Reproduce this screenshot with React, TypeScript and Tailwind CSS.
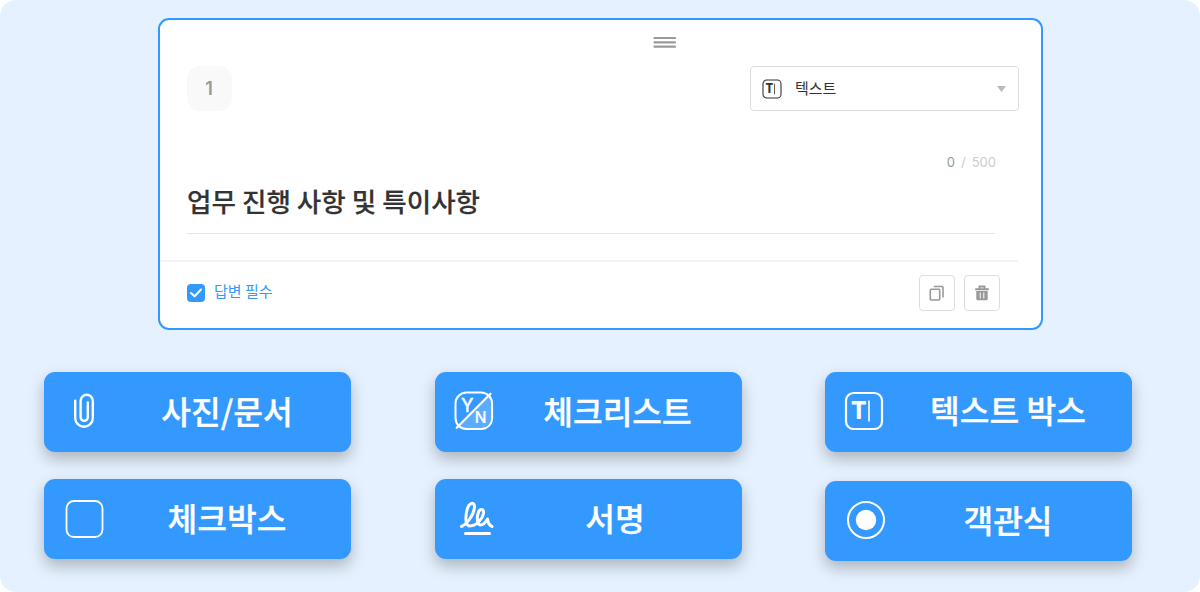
import type { ReactNode } from 'react'

function TextIcon({ className }: { className?: string }) {
  return (
    <svg viewBox="0 0 40 40" className={className} fill="none">
      <rect x="2" y="2" width="36" height="36" rx="7.5" stroke="currentColor" strokeWidth="2.2" />
      <text x="7" y="28" fontSize="25" fontWeight="800" fill="currentColor" textLength="15.5" lengthAdjust="spacingAndGlyphs" className="font-['Inter',sans-serif]">
        T
      </text>
      <path d="M25 9.5v21" stroke="currentColor" strokeWidth="1.6" />
    </svg>
  )
}

function ClipIcon() {
  return (
    <svg viewBox="0 0 24 40" className="ml-[28px] h-10 w-6" fill="none" stroke="white" strokeWidth="2.4" strokeLinecap="round">
      <path d="M3.2 9.7v17.3a8.8 8.8 0 0 0 17.6 0V9.9a6.1 6.1 0 0 0-12.2 0v16.4a3.6 3.6 0 0 0 7.2 0V11.5" />
    </svg>
  )
}

function YesNoIcon() {
  return (
    <svg viewBox="0 0 40 40" className="ml-[19px] h-10 w-10" fill="none">
      <path d="M37 3.5V26A12 12 0 0 1 26 37.5H3z" fill="white" fillOpacity=".2" />
      <rect x="1.5" y="1.5" width="36.6" height="36.6" rx="11" stroke="white" strokeWidth="2" />
      <path d="M2.7 36.8 36.5 2.7" stroke="white" strokeWidth="2.2" strokeLinecap="round" />
      <text x="7" y="21" fontSize="18" fontWeight="500" fill="white" stroke="white" strokeWidth=".3" className="font-['Inter',sans-serif]">
        Y
      </text>
      <text x="20.7" y="31.7" fontSize="15.5" fontWeight="500" fill="white" stroke="white" strokeWidth=".2" className="font-['Inter',sans-serif]">
        N
      </text>
    </svg>
  )
}

function SignIcon() {
  return (
    <svg viewBox="0 0 40 40" className="ml-[22.5px] h-10 w-10" fill="none" stroke="white" strokeWidth="3" strokeLinecap="round" strokeLinejoin="round">
      <path d="M4.5 28.5c5-2 12.5-11.5 13-19.500.2-5.500-5.500-5-7.500 3-2 8.500-1.500 16 3 16 6.500 0 12.500-7 13.500-12.500.8-5.500-4-5.500-5.500 0-1.500 6-.5 11.500 2.500 11.500 3 0 5.500-3.500 7-6 .3 3.500 1.500 6 4.500 7.500" />
      <path d="M8.5 35.5h24" />
    </svg>
  )
}

function CheckboxIcon() {
  return (
    <svg viewBox="0 0 40 40" className="ml-[21px] h-10 w-10" fill="none">
      <rect x="1.5" y="3" width="36" height="36" rx="7.5" stroke="white" strokeWidth="1.8" />
    </svg>
  )
}

function RadioIcon() {
  return (
    <svg viewBox="0 0 40 40" className="ml-[21px] h-10 w-10" fill="none">
      <circle cx="20" cy="20" r="18" stroke="white" strokeWidth="2" />
      <circle cx="20" cy="20" r="10.2" fill="white" />
    </svg>
  )
}

type TypeButtonProps = { icon: ReactNode; label: string; className?: string; labelClassName?: string }

function TypeButton({ icon, label, className = '', labelClassName = 'pr-[21px] pb-[2px]' }: TypeButtonProps) {
  return (
    <button
      className={`flex h-[79.5px] w-[307px] items-center rounded-[11px] bg-[#3399ff] pb-[2px] text-left shadow-[0_7px_15px_rgba(0,0,0,0.25)] ${className}`}
    >
      <span className="flex w-20 shrink-0">{icon}</span>
      <span
        className={`flex-1 text-center text-[32.3px] leading-10 font-medium whitespace-nowrap text-white [-webkit-text-stroke:0.3px_white] ${labelClassName}`}
      >
        {label}
      </span>
    </button>
  )
}

function QuestionCard() {
  return (
    <section className="ml-[158px] h-[312px] w-[885px] rounded-[11px] border-2 border-[#3399ff] bg-white">
      <div className="flex h-[46px] pt-[16px] pl-[493px]">
        <svg viewBox="0 0 23 12" className="h-3 w-[23px]" stroke="#999" strokeWidth="2.2" strokeLinecap="round">
          <path d="M1.5 2H22M1.5 6.3H22M1.5 10.7H22" />
        </svg>
      </div>

      <div className="flex items-start justify-between pr-[22px] pl-[27px]">
        <div className="flex h-[45px] w-[45px] items-center justify-center rounded-[13px] bg-[#f9f9f9] pr-px font-['Inter',sans-serif] text-[18px] font-semibold text-[#999]">
          1
        </div>
        <div className="flex h-[45px] w-[269px] items-center rounded border border-[#ddd] pr-3 pl-[11px]">
          <TextIcon className="h-5 w-5 text-[#333]" />
          <span className="ml-[13px] flex-1 text-[15px] text-[#333]">텍스트</span>
          <svg viewBox="0 0 9 6" className="h-[6px] w-[9px]" fill="#bbb">
            <path d="M0 0h9L4.5 6z" />
          </svg>
        </div>
      </div>

      <div className="mt-[41px] mr-[45px] flex justify-end gap-[6px] font-['Inter',sans-serif] text-[13px] leading-5 text-[#ccc]">
        <span className="text-[#999]">0</span>
        <span>/</span>
        <span>500</span>
      </div>

      <div className="mr-[46px] ml-[27px] h-[62px] border-b border-[#e5e5e5] pt-[9px] text-[26.6px] leading-[40px] font-medium text-[#333] [-webkit-text-stroke:0.2px_#333]">
        업무 진행 사항 및 특이사항
      </div>

      <div className="mt-[26px] mr-[23px] flex items-start border-t-2 border-[#f2f2f2] pr-[18px] pl-[27px]">
        <div className="mt-[22.4px] flex h-[18px] w-[18px] items-center justify-center rounded bg-[#3399ff]">
          <svg viewBox="0 0 12 10" className="h-[10px] w-3" fill="none" stroke="white" strokeWidth="2" strokeLinecap="round" strokeLinejoin="round">
            <path d="M1 5l3.6 3.3L11 1.5" />
          </svg>
        </div>
        <span className="mt-[19px] ml-[9px] flex-1 text-[15px] leading-5 text-[#3399ff]">답변 필수</span>
        <div className="mt-[13.4px] flex gap-[9px]">
          <button className="flex h-9 w-9 items-center justify-center rounded border border-[#ddd]">
            <svg viewBox="0 0 16 16" className="h-4 w-4" fill="none" stroke="#999" strokeWidth="1.6">
              <rect x="1.3" y="4.3" width="9.4" height="10.7" rx="1" />
              <path d="M4.800 1.500h8a1.200 1.200 0 0 1 1.200 1.200v9.800" />
            </svg>
          </button>
          <button className="flex h-9 w-9 items-center justify-center rounded border border-[#ddd]">
            <svg viewBox="0 0 16 16" className="h-4 w-4" fill="none">
              <path d="M1.2 4.2h13.6M5.5 3.5v-2h5v2" stroke="#999" strokeWidth="1.9" />
              <path d="M2.3 6h11.4v7.8a1.5 1.5 0 0 1-1.5 1.5H3.8a1.5 1.5 0 0 1-1.5-1.5z" fill="#999" />
              <path d="M6.2 7.5v6M9.8 7.5v6" stroke="white" strokeWidth="1" />
            </svg>
          </button>
        </div>
      </div>
    </section>
  )
}

export default function App() {
  return (
    <div className="bg-white">
      <main className="h-[592px] w-[1200px] rounded-2xl bg-[#e5f1fe] pt-[18px] font-['Noto_Sans_CJK_KR',sans-serif]">
        <QuestionCard />
        <div className="mt-[42px] ml-[44px] grid grid-cols-[307px_307px_307px] gap-x-[83.5px] gap-y-[27.5px]">
          <TypeButton icon={<ClipIcon />} label="사진/문서" />
          <TypeButton icon={<YesNoIcon />} label="체크리스트" />
          <TypeButton
            icon={<TextIcon className="ml-[18.5px] h-10 w-10 text-white" />}
            label="텍스트 박스"
            labelClassName="pr-[21px] pb-[3px]"
          />
          <TypeButton icon={<CheckboxIcon />} label="체크박스" />
          <TypeButton icon={<SignIcon />} label="서명" labelClassName="pr-[26px] pb-[2px]" />
          <TypeButton icon={<RadioIcon />} label="객관식" className="mt-[2px]" />
        </div>
      </main>
    </div>
  )
}
